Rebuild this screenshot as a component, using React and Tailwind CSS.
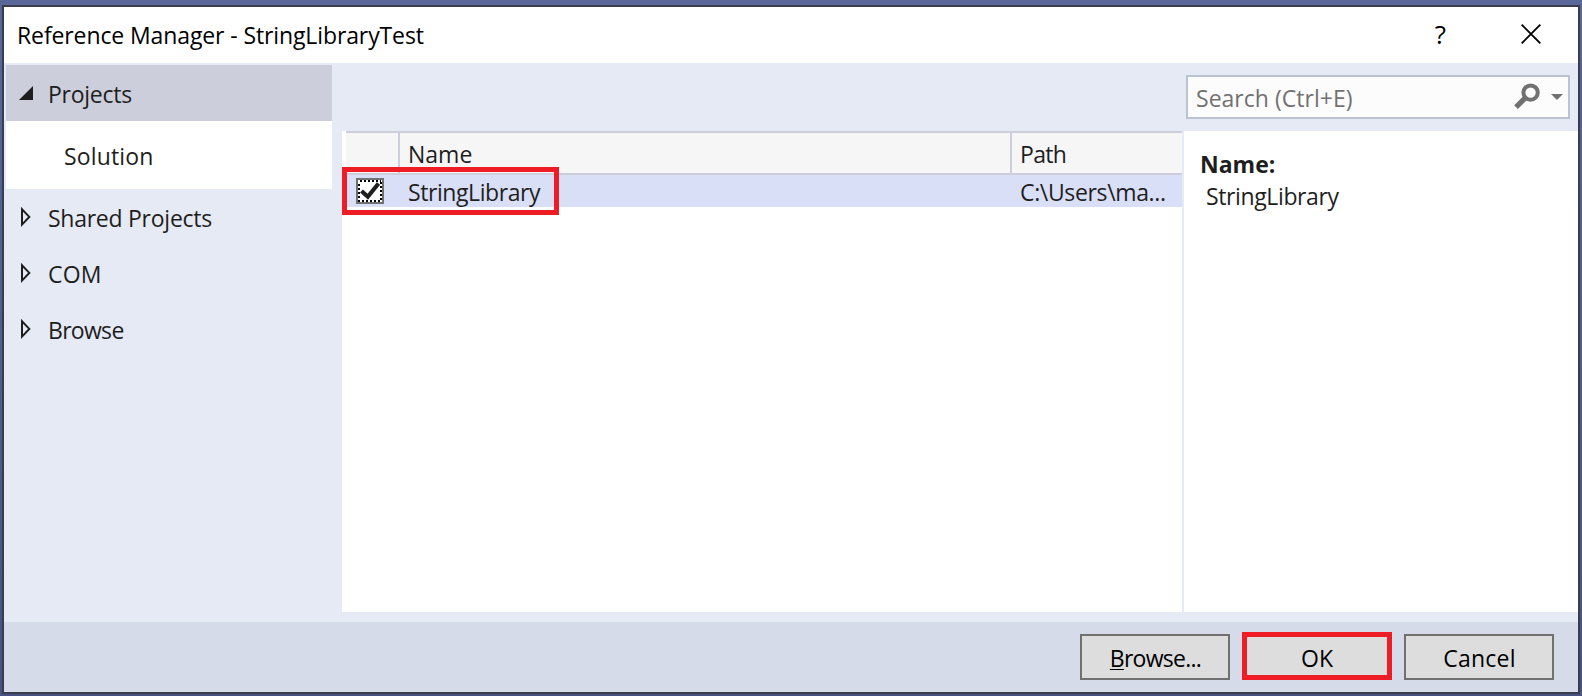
import React from 'react';

function Collapsed() {
  return (
    <svg width="14" height="22" viewBox="0 0 14 22" className="ml-[14px] mr-[14px] shrink-0" fill="none" stroke="#1e1e1e" strokeWidth="2">
      <path d="M2 3.2V18.6L9.3 10.9Z" />
    </svg>
  );
}

function TreeRow({ label, className }) {
  return (
    <div className="flex h-14 items-center">
      <Collapsed />
      <span className={'pt-0.5 ' + className}>{label}</span>
    </div>
  );
}

function Sidebar() {
  return (
    <nav className="w-[326px] shrink-0 pt-0.5">
      <div className="flex h-14 items-center bg-[#cccedb]">
        <svg width="14" height="14" viewBox="0 0 14 14" className="ml-[13px] mr-[15px] shrink-0">
          <path d="M14 0V14H0Z" fill="#1e1e1e" />
        </svg>
        <span className="pt-0.5 tracking-[-0.26px]">Projects</span>
      </div>
      <div className="flex h-[68px] items-center bg-white pl-[58px]">
        <span className="pt-0.5 tracking-[0.16px]">Solution</span>
      </div>
      <TreeRow label="Shared Projects" className="tracking-[-0.26px]" />
      <TreeRow label="COM" className="tracking-[0.2px]" />
      <TreeRow label="Browse" className="tracking-[-0.7px]" />
    </nav>
  );
}

function Checkbox() {
  return (
    <svg width="28" height="26" viewBox="0 0 28 26" className="ml-[10px] shrink-0">
      <rect x="1" y="1" width="26" height="24" fill="#fff" stroke="#717171" strokeWidth="2" />
      <g stroke="#000" strokeWidth="2" strokeDasharray="2 2" shapeRendering="crispEdges">
        <path d="M4 3H25M2 23H25" />
        <path d="M3 6H3V22M25 4V22" />
      </g>
      <path d="M5.5 13L11.8 18.8L22.5 5.5" fill="none" stroke="#1e1e1e" strokeWidth="4.2" />
    </svg>
  );
}

function SearchBox() {
  return (
    <div className="flex h-11 w-96 items-center border-2 border-[#b9c3d1] bg-[#fcfcfc] pl-2 text-[#717171]">
      <span className="flex-1 pt-0.5 tracking-[0.02px]">Search (Ctrl+E)</span>
      <svg width="28" height="28" viewBox="0 0 28 28" className="mr-[10px] -mt-0.5 shrink-0" fill="none" stroke="#717171">
        <circle cx="17.6" cy="10.6" r="7.2" strokeWidth="4" />
        <path d="M12.5 15.7L3 25.2" strokeWidth="5.2" />
      </svg>
      <svg width="12" height="6" viewBox="0 0 12 6" className="mr-[5px] shrink-0">
        <path d="M0 0H12L6 6Z" fill="#717171" />
      </svg>
    </div>
  );
}

function ReferenceList() {
  return (
    <div className="relative w-[840px] shrink-0 bg-white pl-1">
      <div className="flex h-11 border-y-2 border-[#cccedb] bg-[#f6f6f6]">
        <div className="w-[54px] border-r-2 border-[#cccedb]" />
        <div className="flex w-[612px] items-center border-r-2 border-[#cccedb] pl-2">
          <span className="pt-0.5">Name</span>
        </div>
        <div className="flex items-center pl-2">
          <span className="pt-0.5 tracking-[-0.7px]">Path</span>
        </div>
      </div>
      <div className="flex h-8 items-center bg-[#dadff8]">
        <Checkbox />
        <span className="ml-6 w-[612px] pt-0.5 tracking-[-0.42px]">StringLibrary</span>
        <span className="pt-0.5 tracking-[-0.35px]">C:\Users\ma...</span>
      </div>
      <div className="absolute left-0 top-9 h-12 w-[217px] border-[5px] border-[#ee1c25]" />
    </div>
  );
}

export default function App() {
  return (
    <div className="flex h-[696px] w-[1582px] flex-col bg-linear-to-b from-[#596799] to-[#475381] pb-0.5 pl-0.5 pr-0.5 pt-[5px] font-['Open_Sans','Noto_Sans',sans-serif] text-[23px] leading-8 text-[#1e1e1e] whitespace-nowrap">
      <div className="flex flex-1 flex-col border-2 border-[#3a3d4e] bg-[#e6eaf5]">
        <header className="flex h-14 shrink-0 items-center bg-white pl-[13px] text-black">
          <h1 className="flex-1 tracking-[-0.11px]">Reference Manager - StringLibraryTest</h1>
          <span className="-mt-0.5 mr-[75px] text-[26px]">?</span>
          <svg width="20" height="20" viewBox="0 0 20 20" className="mr-[37px] -mt-0.5" fill="none" stroke="#000" strokeWidth="1.9">
            <path d="M.7 .7L19.3 19.3M19.3 .7L.7 19.3" />
          </svg>
        </header>
        <div className="flex min-h-0 flex-1 pl-0.5">
          <Sidebar />
          <main className="ml-[10px] flex flex-1 flex-col pb-[10px]">
            <div className="flex h-[68px] shrink-0 items-center justify-end pr-2">
              <SearchBox />
            </div>
            <div className="flex flex-1">
              <ReferenceList />
              <aside className="ml-0.5 flex-1 bg-white pt-[17px]">
                <div className="pl-4 font-bold">Name:</div>
                <div className="pl-[22px] tracking-[-0.38px]">StringLibrary</div>
              </aside>
            </div>
          </main>
        </div>
        <footer className="flex h-[70px] shrink-0 items-start justify-end gap-3 bg-[#d5dbe9] pr-6 pt-3 text-black">
          <button className="h-[46px] w-[150px] border-2 border-[#707070] bg-[#dddddd] pl-px pt-0.5 tracking-[-0.73px]">
            <span className="underline decoration-1 underline-offset-2">B</span>rowse...
          </button>
          <button className="-mt-0.5 h-12 w-[150px] border-[5px] border-[#ee1c25] bg-[#dddddd] pt-1">OK</button>
          <button className="h-[46px] w-[150px] border-2 border-[#707070] bg-[#dddddd] pl-px pt-0.5 tracking-[0.25px]">Cancel</button>
        </footer>
      </div>
    </div>
  );
}
